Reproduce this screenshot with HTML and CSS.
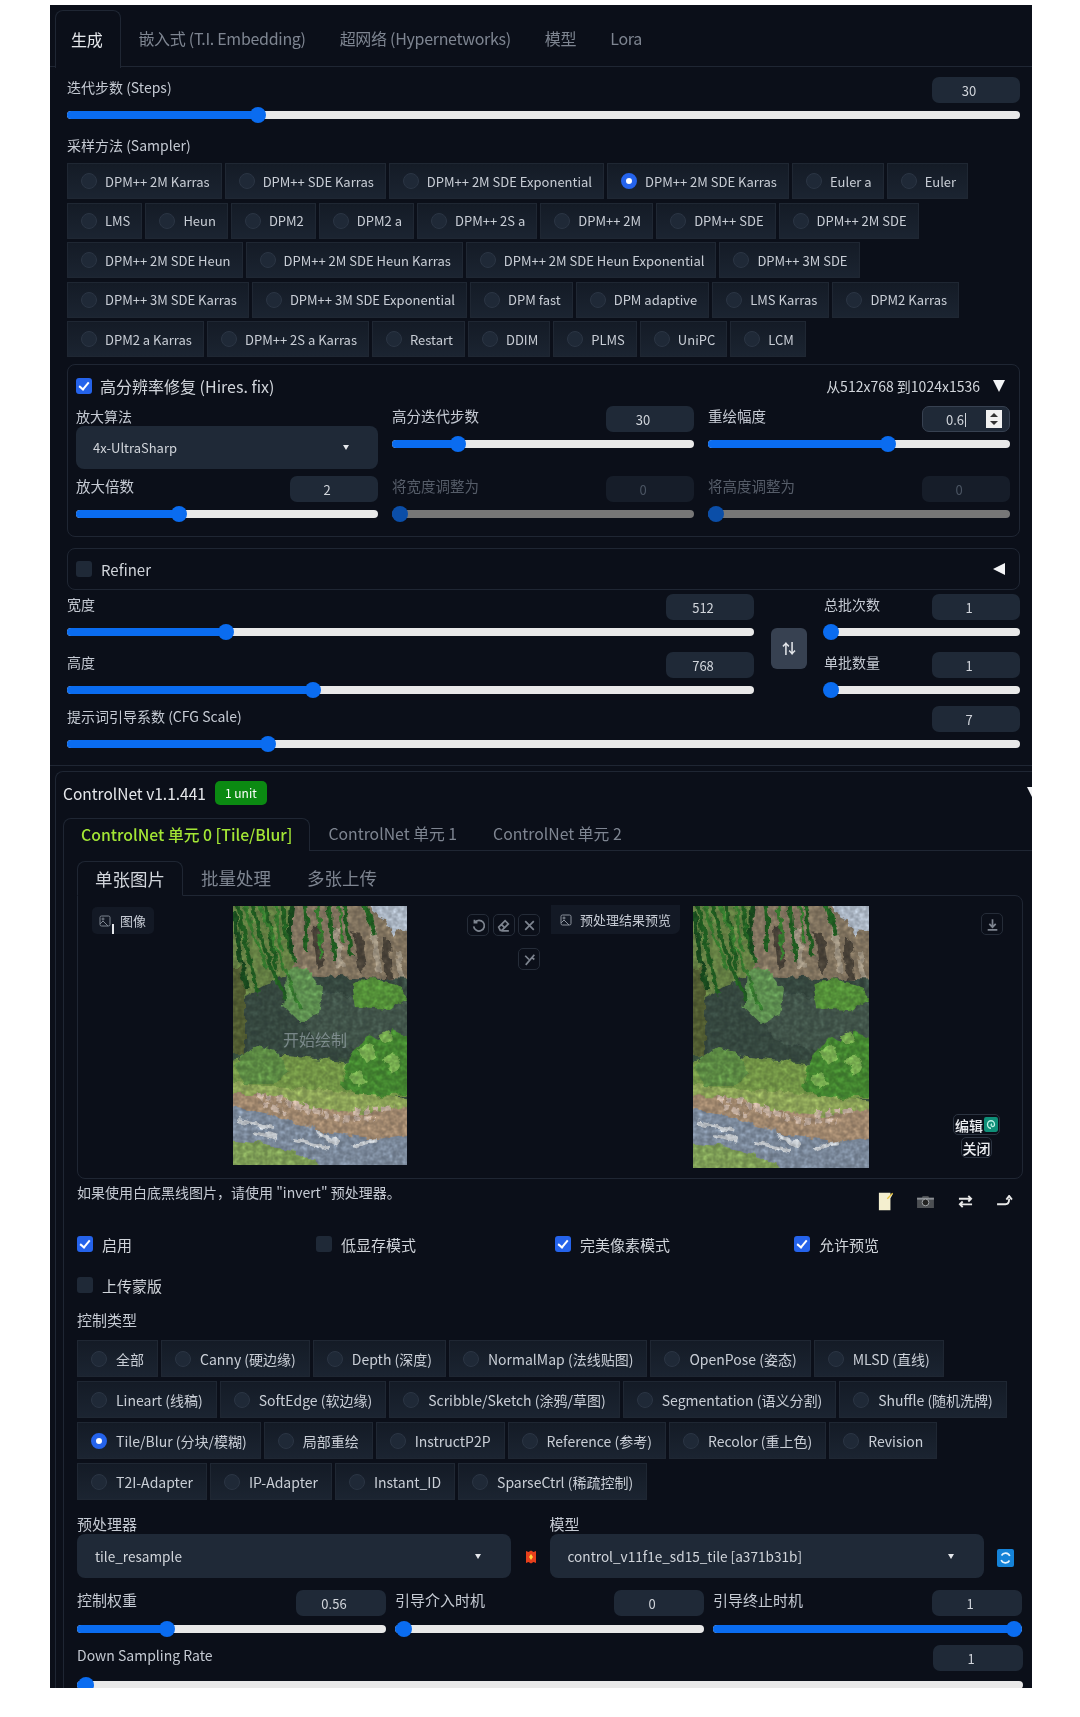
FILE: index.html
```html
<!DOCTYPE html>
<html lang="zh-CN">
<head>
  <meta charset="UTF-8">
  <title>Stable Diffusion WebUI</title>
  <link rel="stylesheet" href="styles.css">
</head>
<body>

<svg class="defs" width="0" height="0">
  <defs>
    <filter id="paint" x="0" y="0" width="100%" height="100%" color-interpolation-filters="sRGB">
      <feTurbulence type="fractalNoise" baseFrequency="0.09" numOctaves="3" seed="7" result="warp"/>
      <feDisplacementMap in="SourceGraphic" in2="warp" scale="9" xChannelSelector="R" yChannelSelector="G" result="shapes"/>
      <feTurbulence type="fractalNoise" baseFrequency="0.2" numOctaves="2" seed="3"/>
      <feColorMatrix type="saturate" values="0"/>
      <feComposite in2="shapes" operator="arithmetic" k1="0.75" k2="0" k3="0.66" k4="0"/>
      <feGaussianBlur stdDeviation="0.7"/>
    </filter>
    <symbol id="river" viewBox="0 0 174 259" preserveAspectRatio="none">
      <g filter="url(#paint)">
        <rect x="-8" y="-8" width="190" height="275" fill="#44604a"/>
        <path d="M110-8h72v60h-72z" fill="#c9d6e6"/>
        <path d="M56-8h78l6 14 12 6 8 18 8-8 16 8v70H56z" fill="#97876f"/>
        <path d="M80 20l8-2 4 38-8 8zM120 24l8 2 6 34-8 8zM150 30l7 6 2 36-8 2z" fill="#544c40"/>
        <path d="M102 24l6 36M140 22l6 44M165 46l4 30" stroke="#bbae98" stroke-width="6" fill="none"/>
        <path d="M-8-8h64l10 158H-8z" fill="#76964f"/>
        <path d="M-8 60h18l6 90H-8z" fill="#5f6c3a"/>
        <path d="M12 150V92l40-24 70 4 60 2v82z" fill="#3f544a"/>
        <path d="M60 94l40-8 40 8 40 0v44l-50 8-50-14z" fill="#4c6256"/>
        <path d="M52 66l22-4 16 20-4 26-20 8-16-16z" fill="#6ea85e"/>
        <path d="M118 78l18-6 28 6 10 14-16 12-36-2z" fill="#62a842"/>
        <path d="M-8 156l40-8 60 6 90 10v26l-80 6-110-4z" fill="#86ae52"/>
        <path d="M2 156l22-16 22 6 10 18-14 14-32 0z" fill="#6ca24f"/>
        <path d="M110 168l12-26 14-14 12 8 10-12 24 8v56l-54 2-20-10z" fill="#4f9c38"/>
        <path d="M126 142l10-6 8 14-10 8zM150 152l10-6 10 14-12 6zM116 170l10-6 8 12-10 6zM146 128l8-4 6 10-8 6z" fill="#8ccb5e"/>
        <path d="M-8 176l60 6 60 4 70 8v22l-30 4-70-12-50-6-40-8z" fill="#a4bf66"/>
        <path d="M-8 188l40 0 46 14 60 6 44-10v36l-46 0-52-6-52-18-40-8z" fill="#bb9e80"/>
        <path d="M24 190l24 4 30 12 30 6 34 2M60 198l30 8M120 206l40-4M30 198l24 8" stroke="#e0c8b6" stroke-width="6" stroke-dasharray="6 4" fill="none"/>
        <path d="M-8 200l44 8 54 18 54 8 32-6v38H-8z" fill="#8f9fb4"/>
        <path d="M6 214l34 8M60 234l36 8M84 226l22 12M120 240l24-6M20 226l24 6" stroke="#e4eaf0" stroke-width="4" fill="none"/>
        <path d="M-8 234l42 4 40 12 26 16H-8z" fill="#93b864"/>
        <path d="M4-8c6 30 10 60 22 96M18-8c8 36 18 70 34 100M32-8c4 26 6 50 12 72M50-8c-2 24 6 46 12 66M70-8c6 20 2 40 2 54M96-8c2 24 2 40 6 62M110-8c4 20 6 40 8 58M128-8c6 12 10 24 14 38" stroke="#256d26" stroke-width="4" fill="none"/>
        <path d="M10-8c6 24 14 50 24 70M24-8c10 30 24 60 44 110M42-8c4 24 2 40 8 52M84-8c2 24 6 40 4 60M104-8c4 18 2 30 6 44" stroke="#3f8f36" stroke-width="3" fill="none"/>
        <path d="M0 4c10 30 4 50 14 78M60-8c-6 26-2 40 0 58" stroke="#1c5622" stroke-width="4" fill="none"/>
      </g>
    </symbol>
  </defs>
</svg>

<div class="panel">
  <div class="tabs">
    <div class="tab active">生成</div>
    <div class="tab">嵌入式 (T.I. Embedding)</div>
    <div class="tab">超网络 (Hypernetworks)</div>
    <div class="tab">模型</div>
    <div class="tab">Lora</div>
  </div>

  <div class="gen">
    <div class="field">
      <div class="head"><span>迭代步数 (Steps)</span><b class="num">30</b></div>
      <div class="slider"><div class="fill" style="width:20%"></div></div>
    </div>

    <div class="label sampler-label">采样方法 (Sampler)</div>
    <div class="chips sampler">
      <label class="chip"><i></i>DPM++ 2M Karras</label>
      <label class="chip"><i></i>DPM++ SDE Karras</label>
      <label class="chip"><i></i>DPM++ 2M SDE Exponential</label>
      <label class="chip on"><i></i>DPM++ 2M SDE Karras</label>
      <label class="chip"><i></i>Euler a</label>
      <label class="chip"><i></i>Euler</label>
      <label class="chip"><i></i>LMS</label>
      <label class="chip"><i></i>Heun</label>
      <label class="chip"><i></i>DPM2</label>
      <label class="chip"><i></i>DPM2 a</label>
      <label class="chip"><i></i>DPM++ 2S a</label>
      <label class="chip"><i></i>DPM++ 2M</label>
      <label class="chip"><i></i>DPM++ SDE</label>
      <label class="chip"><i></i>DPM++ 2M SDE</label>
      <label class="chip"><i></i>DPM++ 2M SDE Heun</label>
      <label class="chip"><i></i>DPM++ 2M SDE Heun Karras</label>
      <label class="chip"><i></i>DPM++ 2M SDE Heun Exponential</label>
      <label class="chip"><i></i>DPM++ 3M SDE</label>
      <label class="chip"><i></i>DPM++ 3M SDE Karras</label>
      <label class="chip"><i></i>DPM++ 3M SDE Exponential</label>
      <label class="chip"><i></i>DPM fast</label>
      <label class="chip"><i></i>DPM adaptive</label>
      <label class="chip"><i></i>LMS Karras</label>
      <label class="chip"><i></i>DPM2 Karras</label>
      <label class="chip"><i></i>DPM2 a Karras</label>
      <label class="chip"><i></i>DPM++ 2S a Karras</label>
      <label class="chip"><i></i>Restart</label>
      <label class="chip"><i></i>DDIM</label>
      <label class="chip"><i></i>PLMS</label>
      <label class="chip"><i></i>UniPC</label>
      <label class="chip"><i></i>LCM</label>
    </div>

    <!-- Hires. fix -->
    <div class="box hires">
      <div class="box-head">
        <label class="check-label big"><i class="check on"></i>高分辨率修复 (Hires. fix)</label>
        <span class="size-info">从512x768 到1024x1536</span>
        <i class="tri-down"></i>
      </div>
      <div class="hires-grid">
        <div>
          <div class="label short">放大算法</div>
          <div class="select"><span>4x-UltraSharp</span><i class="caret"></i></div>
        </div>
        <div class="field">
          <div class="head"><span>高分迭代步数</span><b class="num">30</b></div>
          <div class="slider"><div class="fill" style="width:21.7%"></div></div>
        </div>
        <div class="field">
          <div class="head"><span>重绘幅度</span>
            <b class="num focus">0.6<u></u><em class="spin"></em></b>
          </div>
          <div class="slider"><div class="fill" style="width:59.7%"></div></div>
        </div>
        <div class="field">
          <div class="head"><span>放大倍数</span><b class="num">2</b></div>
          <div class="slider"><div class="fill" style="width:34.2%"></div></div>
        </div>
        <div class="field off">
          <div class="head"><span>将宽度调整为</span><b class="num">0</b></div>
          <div class="slider"><div class="fill" style="width:2.6%"></div></div>
        </div>
        <div class="field off">
          <div class="head"><span>将高度调整为</span><b class="num">0</b></div>
          <div class="slider"><div class="fill" style="width:2.6%"></div></div>
        </div>
      </div>
    </div>

    <div class="box refiner">
      <label class="check-label"><i class="check"></i>Refiner</label>
      <i class="tri-left"></i>
    </div>

    <div class="size-row">
      <div class="stack wide">
        <div class="field">
          <div class="head"><span>宽度</span><b class="num">512</b></div>
          <div class="slider"><div class="fill" style="width:23.2%"></div></div>
        </div>
        <div class="field">
          <div class="head"><span>高度</span><b class="num">768</b></div>
          <div class="slider"><div class="fill" style="width:35.8%"></div></div>
        </div>
      </div>
      <div class="swap">⇅</div>
      <div class="stack narrow">
        <div class="field">
          <div class="head"><span>总批次数</span><b class="num">1</b></div>
          <div class="slider"><div class="fill" style="width:3.8%"></div></div>
        </div>
        <div class="field">
          <div class="head"><span>单批数量</span><b class="num">1</b></div>
          <div class="slider"><div class="fill" style="width:3.8%"></div></div>
        </div>
      </div>
    </div>

    <div class="field cfg">
      <div class="head"><span>提示词引导系数 (CFG Scale)</span><b class="num">7</b></div>
      <div class="slider"><div class="fill" style="width:21.1%"></div></div>
    </div>
  </div>

  <!-- ControlNet -->
  <div class="accordion">
    <div class="acc-head">
      <span class="acc-title">ControlNet v1.1.441</span>
      <span class="badge">1 unit</span>
      <i class="tri-down edge"></i>
    </div>

    <div class="unit-tabs">
      <div class="unit-tab active">ControlNet 单元 0 [Tile/Blur]</div>
      <div class="unit-tab">ControlNet 单元 1</div>
      <div class="unit-tab">ControlNet 单元 2</div>
    </div>

    <div class="unit">
      <div class="img-tabs">
        <div class="img-tab active">单张图片</div>
        <div class="img-tab">批量处理</div>
        <div class="img-tab">多张上传</div>
      </div>

      <div class="imgbox">
        <div class="half left">
          <div class="img-badge">
            <svg width="12" height="12" viewBox="0 0 12 12" fill="none" stroke="#7d8590"><rect x="1" y="1" width="10" height="10" rx="1.5"/><circle cx="4" cy="4" r="1"/><path d="M1 9l3-3 5 5"/></svg>
            <span>图像</span>
          </div>
          <i class="ibeam"></i>
          <svg class="photo"><use href="#river"/></svg>
          <span class="start">开始绘制</span>
          <div class="tools">
            <div class="tool"><svg viewBox="0 0 14 14"><path d="M3.4 4.2a5 5 0 1 1-.9 3.600M3.200 1.600v2.800h2.800"/></svg></div>
            <div class="tool"><svg viewBox="0 0 14 14"><path d="M2.500 8.500l6-6 3 3-6 6H4zM5 6l3 3M5 12h7"/></svg></div>
            <div class="tool"><svg viewBox="0 0 14 14"><path d="M3 3l8 8M11 3l-8 8"/></svg></div>
            <div class="tool"><svg viewBox="0 0 14 14"><path d="M3 3.500l3.500 3.500M11.500 2.500L3.500 12M9 5l2.500 2"/></svg></div>
          </div>
        </div>
        <div class="half right">
          <div class="img-badge flush">
            <svg width="12" height="12" viewBox="0 0 12 12" fill="none" stroke="#8b929c"><rect x="1" y="1" width="10" height="10" rx="1.5"/><circle cx="4" cy="4" r="1"/><path d="M1 9l3-3 5 5"/></svg>
            <span>预处理结果预览</span>
          </div>
          <svg class="photo big"><use href="#river"/></svg>
          <div class="tool download"><svg viewBox="0 0 14 14"><path d="M7 2v7M4 6.500L7 9.500l3-3M2.500 12h9"/></svg></div>
          <div class="mini edit"><span>编辑</span>
            <svg width="14" height="15" viewBox="0 0 14 14" preserveAspectRatio="none"><rect width="14" height="14" rx="2" fill="#0f8f78"/><path d="M7 10.500a3.500 3.500 0 1 1 3.500-3.500c0 1.600-1.400 2.200-2.400 1.800S6.600 7 8 6.500" fill="none" stroke="#bff2e4" stroke-width="1.300"/></svg>
          </div>
          <div class="mini close">关闭</div>
        </div>
      </div>

      <div class="hint-row">
        <span class="hint">如果使用白底黑线图片，请使用 "invert" 预处理器。</span>
        <div class="actions">
          <svg width="16" height="19" viewBox="0 0 18 24" preserveAspectRatio="none"><path d="M1 1h13v3l3-2-3 6v15H1z" fill="#f4efcf"/><path d="M10 8l6-7 1 1-6 7z" fill="#e8c33a"/></svg>
          <svg width="19" height="15" viewBox="0 0 20 16"><path d="M1 4h5l1-2h6l1 2h5v11H1z" fill="#4c4f53"/><path d="M1 4h18v2H1z" fill="#8c9095"/><circle cx="10" cy="9" r="3.600" fill="#222" stroke="#a4a7ab"/></svg>
          <svg width="17" height="15" viewBox="0 0 18 16" fill="none" stroke="#e8e8e8" stroke-width="2"><path d="M2 5h13M12 2l3 3-3 3M16 11H3M6 8l-3 3 3 3"/></svg>
          <svg width="17" height="13" viewBox="0 0 18 14" fill="none" stroke="#e8e8e8" stroke-width="2"><path d="M1 10h9c3 0 4-2 4-6M11 5l3-4 3 4"/></svg>
        </div>
      </div>

      <div class="checks">
        <label class="check-label"><i class="check on"></i>启用</label>
        <label class="check-label"><i class="check"></i>低显存模式</label>
        <label class="check-label"><i class="check on"></i>完美像素模式</label>
        <label class="check-label"><i class="check on"></i>允许预览</label>
        <label class="check-label"><i class="check"></i>上传蒙版</label>
      </div>

      <div class="label type-label">控制类型</div>
      <div class="chips types">
        <label class="chip"><i></i>全部</label>
        <label class="chip"><i></i>Canny (硬边缘)</label>
        <label class="chip"><i></i>Depth (深度)</label>
        <label class="chip"><i></i>NormalMap (法线贴图)</label>
        <label class="chip"><i></i>OpenPose (姿态)</label>
        <label class="chip"><i></i>MLSD (直线)</label>
        <label class="chip"><i></i>Lineart (线稿)</label>
        <label class="chip"><i></i>SoftEdge (软边缘)</label>
        <label class="chip"><i></i>Scribble/Sketch (涂鸦/草图)</label>
        <label class="chip"><i></i>Segmentation (语义分割)</label>
        <label class="chip"><i></i>Shuffle (随机洗牌)</label>
        <label class="chip on"><i></i>Tile/Blur (分块/模糊)</label>
        <label class="chip"><i></i>局部重绘</label>
        <label class="chip"><i></i>InstructP2P</label>
        <label class="chip"><i></i>Reference (参考)</label>
        <label class="chip"><i></i>Recolor (重上色)</label>
        <label class="chip"><i></i>Revision</label>
        <label class="chip"><i></i>T2I-Adapter</label>
        <label class="chip"><i></i>IP-Adapter</label>
        <label class="chip"><i></i>Instant_ID</label>
        <label class="chip"><i></i>SparseCtrl (稀疏控制)</label>
      </div>

      <div class="model-row">
        <div class="model-col">
          <div class="label short">预处理器</div>
          <div class="select tall"><span>tile_resample</span><i class="caret"></i></div>
        </div>
        <svg class="fire" width="12" height="14" viewBox="0 0 12 14"><path d="M1 1l2.500 1L6 .5 8.500 2 11 1v12l-2.500-1L6 13.500 3.500 12 1 13z" fill="#e8401c"/><path d="M6 4l2 3-2 3-2-3z" fill="#ffd23c"/></svg>
        <div class="model-col">
          <div class="label short">模型</div>
          <div class="select tall"><span>control_v11f1e_sd15_tile [a371b31b]</span><i class="caret"></i></div>
        </div>
        <svg class="refresh" width="17" height="18" viewBox="0 0 17 18"><rect width="17" height="18" rx="2" fill="#1583d8"/><path d="M12.800 7A4.600 4.600 0 0 0 4.500 6.500M4.200 11a4.600 4.600 0 0 0 8.300.5" fill="none" stroke="#e6f4ff" stroke-width="1.600"/></svg>
      </div>

      <div class="control-row">
        <div class="field">
          <div class="head"><span>控制权重</span><b class="num">0.56</b></div>
          <div class="slider"><div class="fill" style="width:29.1%"></div></div>
        </div>
        <div class="field">
          <div class="head"><span>引导介入时机</span><b class="num">0</b></div>
          <div class="slider"><div class="fill" style="width:2.9%"></div></div>
        </div>
        <div class="field">
          <div class="head"><span>引导终止时机</span><b class="num">1</b></div>
          <div class="slider"><div class="fill" style="width:97.4%"></div></div>
        </div>
      </div>

      <div class="field down-rate">
        <div class="head"><span>Down Sampling Rate</span><b class="num">1</b></div>
        <div class="slider"><div class="fill" style="width:0.95%"></div></div>
      </div>
    </div>
  </div>
</div>

</body>
</html>
```

FILE: styles.css
```css
body {
  margin: 0;
  background: white;
  font-family: "Noto Sans CJK SC", "Noto Sans", sans-serif;
  font-size: 14px;
  color: #c5cad3;
}
.defs {
  position: absolute;
}
.panel {
  width: 982px;
  height: 1683px;
  margin: 5px 0 0 50px;
  background: #0b0f19;
  overflow: hidden;
  filter: blur(0.4px);
}

/* Top tabs */
.tabs {
  display: flex;
  height: 62px;
  padding-left: 5px;
  border-bottom: 1px solid #1f2633;
  box-sizing: border-box;
}
.tab {
  margin-top: 5px;
  padding: 0 17px;
  font-size: 16px;
  line-height: 56px;
  letter-spacing: -0.3px;
  color: #7e8591;
}
.tab.active {
  color: #e5e7eb;
  border: 1px solid #1f2633;
  border-bottom: 0;
  border-radius: 8px 8px 0 0;
  height: 57px;
  padding: 0 18px 0 15px;
  background: #0b0f19;
}

.gen {
  padding: 10px 12px 17px 17px;
  border-bottom: 1px solid #1f2633;
}

/* Label + number + slider */
.head {
  display: flex;
  justify-content: space-between;
  align-items: flex-start;
  height: 26px;
  line-height: 20px;
}
.num {
  width: 88px;
  height: 26px;
  box-sizing: border-box;
  padding-right: 14px;
  border-radius: 7px;
  background: #1f2937;
  font-size: 13px;
  font-weight: normal;
  line-height: 27px;
  text-align: center;
  color: #d1d5db;
  position: relative;
}
.num.focus {
  border: 1px solid #374151;
  line-height: 25px;
  padding-right: 20px;
}
.num u {
  display: inline-block;
  width: 1px;
  height: 14px;
  margin-left: 1px;
  vertical-align: -2px;
  background: #d1d5db;
}
.spin {
  position: absolute;
  top: 3px;
  right: 7px;
  width: 16px;
  height: 18px;
  background: #f1f1f1;
}
.spin::before, .spin::after {
  content: "";
  position: absolute;
  left: 4px;
  border-left: 4px solid transparent;
  border-right: 4px solid transparent;
}
.spin::before {
  top: 3px;
  border-bottom: 4px solid #333;
}
.spin::after {
  bottom: 3px;
  border-top: 4px solid #333;
}
.slider {
  height: 8px;
  margin-top: 8px;
  border-radius: 4px;
  background: #e9e9e9;
}
.fill {
  position: relative;
  height: 8px;
  border-radius: 4px;
  background: #0a6cf0;
}
.fill::after {
  content: "";
  position: absolute;
  right: -8px;
  top: -4px;
  width: 16px;
  height: 16px;
  border-radius: 50%;
  background: #0a6cf0;
}
.off .head {
  color: #565d69;
}
.off .num {
  color: #4b5563;
  background: #161d29;
}
.off .slider {
  background: #777;
}
.off .fill, .off .fill::after {
  background: #0b4ea8;
}

.label {
  line-height: 20px;
}
.sampler-label {
  margin: 16px 0 8px;
}

/* Radio chips */
.chips {
  display: flex;
  flex-wrap: wrap;
}
.chip {
  display: flex;
  align-items: center;
  box-sizing: border-box;
  border: 1px solid #1f2733;
  background: linear-gradient(to bottom, #141b26, #1b2431);
  font-size: 13px;
  color: #c9ced6;
  white-space: nowrap;
}
.chip i {
  flex: none;
  width: 16px;
  height: 16px;
  border-radius: 50%;
  background: #1f2937;
  border: 1px solid #2b3544;
  box-sizing: border-box;
}
.chip.on i {
  border: 5px solid #2563eb;
  background: white;
}
.sampler {
  gap: 3.5px 3px;
}
.sampler .chip {
  height: 36px;
  padding: 0 11px 0 13px;
  gap: 8px;
}

/* Bordered groups */
.box {
  border: 1px solid #1f2633;
  border-radius: 8px;
}
.hires {
  margin-top: 7px;
  padding: 11px 8px 18px;
}
.box-head {
  display: flex;
  align-items: center;
  height: 20px;
  margin-bottom: 10px;
}
.check-label {
  display: flex;
  align-items: center;
  gap: 9px;
  font-size: 15px;
  color: #d1d5db;
}
.check-label.big {
  gap: 8px;
  font-size: 16px;
}
.check {
  flex: none;
  width: 16px;
  height: 16px;
  border-radius: 3px;
  background: #1f2937;
  position: relative;
}
.check.on {
  background: #2563eb;
}
.check.on::after {
  content: "";
  position: absolute;
  left: 5px;
  top: 2px;
  width: 4px;
  height: 8px;
  border: solid white;
  border-width: 0 2px 2px 0;
  transform: rotate(40deg);
}
.size-info {
  margin-left: auto;
  margin-right: 13px;
  font-size: 14px;
  color: #d1d5db;
}
.tri-down {
  width: 0;
  height: 0;
  margin-right: 6px;
  border-left: 6px solid transparent;
  border-right: 6px solid transparent;
  border-top: 12px solid #f3f4f6;
}
.tri-left {
  width: 0;
  height: 0;
  margin-right: 14px;
  border-top: 6px solid transparent;
  border-bottom: 6px solid transparent;
  border-right: 12px solid #f3f4f6;
}
.hires-grid {
  display: grid;
  grid-template-columns: repeat(3, 302px);
  gap: 7px 14px;
}
.hires-grid .head span {
  font-size: 14.500px;
}
.short {
  height: 20px;
}
.select {
  display: flex;
  align-items: center;
  justify-content: space-between;
  height: 43px;
  padding: 0 29px 0 17px;
  border-radius: 8px;
  background: #1f2937;
  font-size: 13px;
  color: #d1d5db;
}
.select.tall {
  height: 44px;
  padding: 0 30px 0 18px;
  font-size: 13.600px;
}
.caret {
  width: 0;
  height: 0;
  border-left: 3.500px solid transparent;
  border-right: 3.500px solid transparent;
  border-top: 5px solid #e5e7eb;
}
.refiner {
  display: flex;
  align-items: center;
  justify-content: space-between;
  height: 42px;
  box-sizing: border-box;
  margin-top: 11px;
  padding-left: 8px;
}

.size-row {
  display: flex;
  margin-top: 4px;
}
.stack .field + .field {
  margin-top: 16px;
}
.wide {
  width: 687px;
}
.narrow {
  width: 196px;
}
.swap {
  width: 36px;
  height: 41px;
  margin: 34px 17px 0 17px;
  border-radius: 6px;
  background: #374151;
  color: #e5e7eb;
  font-size: 14px;
  font-weight: bold;
  line-height: 39px;
  text-align: center;
}
.cfg {
  margin-top: 12px;
}

/* ControlNet */
.accordion {
  margin: 5px 0 0 5px;
  border-top: 1px solid #1f2633;
  border-left: 1px solid #1f2633;
  border-radius: 8px 0 0 0;
}
.acc-head {
  display: flex;
  align-items: center;
  height: 24px;
  padding: 9px 0 13px 7px;
}
.acc-title {
  font-size: 15.500px;
  color: #e5e7eb;
}
.badge {
  margin-left: 9px;
  width: 52px;
  height: 24px;
  border-radius: 5px;
  background: #0b8a12;
  color: white;
  font-size: 12px;
  line-height: 24px;
  text-align: center;
}
.tri-down.edge {
  margin-left: auto;
  margin-right: -7px;
}
.unit-tabs {
  display: flex;
  height: 33px;
  margin-left: 7px;
  border-bottom: 1px solid #1f2633;
  box-sizing: border-box;
}
.unit-tab {
  padding: 0 18px;
  font-size: 15.800px;
  line-height: 32px;
  color: #7e8591;
}
.unit-tab.active {
  height: 33px;
  box-sizing: border-box;
  padding: 0 17px;
  border: 1px solid #1f2633;
  border-bottom: 0;
  border-radius: 8px 8px 0 0;
  background: #0b0f19;
  font-weight: 500;
  color: #a3e635;
}
.unit {
  margin-left: 7px;
  padding: 10px 9px 0 13px;
  border-left: 1px solid #1f2633;
}
.img-tabs {
  display: flex;
  height: 35px;
  margin-bottom: -1px;
  position: relative;
}
.img-tab {
  padding: 0 18px;
  font-size: 17.500px;
  line-height: 34px;
  color: #7e8591;
}
.img-tab.active {
  border: 1px solid #1f2633;
  border-bottom: 1px solid #0b0f19;
  border-radius: 8px 8px 0 0;
  color: #d1d5db;
  box-sizing: border-box;
  padding: 0 17px;
}
.imgbox {
  display: flex;
  height: 284px;
  box-sizing: border-box;
  border: 1px solid #1f2633;
  border-radius: 0 8px 8px 8px;
}
.half {
  position: relative;
  box-sizing: border-box;
  padding-top: 10px;
}
.half.left {
  width: 473px;
  padding-left: 155px;
}
.half.right {
  flex: 1;
  padding-left: 142px;
}
.photo {
  display: block;
  width: 174px;
  height: 259px;
}
.photo.big {
  width: 176px;
  height: 262px;
}
.img-badge {
  position: absolute;
  left: 14px;
  top: 11px;
  display: flex;
  align-items: center;
  gap: 9px;
  height: 27px;
  padding: 0 8px 0 7px;
  border-radius: 5px;
  background: #131925;
  font-size: 13px;
  color: #c5cad3;
}
.img-badge.flush {
  left: 0;
  top: 9px;
  height: 29px;
  padding: 0 9px;
  border-radius: 0 0 7px 0;
  gap: 8px;
}
.ibeam {
  position: absolute;
  left: 34px;
  top: 28px;
  width: 2px;
  height: 10px;
  background: #e5e7eb;
}
.start {
  position: absolute;
  left: 205px;
  top: 131px;
  font-size: 16px;
  color: rgba(175, 185, 195, 0.55);
}
.tools {
  position: absolute;
  left: 388px;
  top: 18px;
  width: 74px;
  display: flex;
  flex-wrap: wrap;
  justify-content: flex-end;
  gap: 12px 3.500px;
}
.tool {
  display: flex;
  align-items: center;
  justify-content: center;
  width: 22px;
  height: 22px;
  box-sizing: border-box;
  border: 1px solid #252c38;
  border-radius: 5px;
}
.tool svg {
  width: 15px;
  height: 15px;
  fill: none;
  stroke: #7d848f;
  stroke-width: 1.600;
}
.download {
  position: absolute;
  left: 430px;
  top: 17px;
}
.mini {
  position: absolute;
  display: flex;
  align-items: center;
  justify-content: center;
  gap: 1px;
  height: 21px;
  box-sizing: border-box;
  border: 1px solid #2b3340;
  border-radius: 5px;
  font-size: 14px;
  font-weight: 500;
  color: #eceef1;
}
.edit {
  left: 402px;
  top: 218px;
  width: 47px;
}
.close {
  left: 410px;
  top: 241px;
  width: 31px;
}

.hint-row {
  display: flex;
  justify-content: space-between;
  height: 57px;
  padding-top: 3px;
  box-sizing: border-box;
  line-height: 20px;
}
.hint {
  font-size: 14px;
  color: #c5cad3;
}
.actions {
  display: flex;
  align-items: center;
  gap: 22px;
  height: 38px;
  margin-right: 10px;
}
.checks {
  display: grid;
  grid-template-columns: repeat(4, 239px);
  gap: 25px 0;
}
.checks .check-label {
  height: 16px;
}
.type-label {
  margin: 17px 0 10px;
  font-size: 15px;
}
.types {
  gap: 4px 3px;
}
.types .chip {
  height: 37px;
  padding: 0 13px;
  gap: 9px;
  font-size: 14px;
}

.model-row {
  display: flex;
  margin-top: 14px;
}
.model-row .label {
  font-size: 15px;
}
.model-col {
  width: 434px;
}
.fire {
  margin: 36px 12.500px 0 14px;
}
.refresh {
  margin: 35px 0 0 13px;
}
.control-row {
  display: grid;
  grid-template-columns: repeat(3, 309px);
  gap: 9px;
  margin-top: 12px;
}
.control-row .num, .down-rate .num {
  width: 90px;
}
.control-row .slider {
  margin-top: 9px;
}
.unit .head {
  font-size: 15px;
}
.down-rate {
  margin-top: 12px;
}
.down-rate .slider {
  margin-top: 10px;
}
.down-rate .head {
  font-size: 14px;
}
```
